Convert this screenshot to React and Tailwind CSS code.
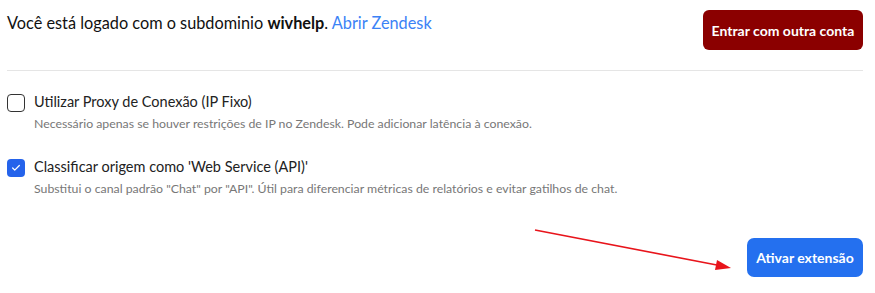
import { useState } from 'react';
import { Check } from 'lucide-react';

function Option({ checked, onToggle, label, hint }) {
  return (
    <div className="flex items-start gap-[9px]">
      <button
        onClick={onToggle}
        className={`mt-[3px] flex h-[18px] w-[18px] shrink-0 items-center justify-center rounded-[4px] ${
          checked ? 'bg-[#2563eb]' : 'border-[1.5px] border-[#333] bg-white'
        }`}
      >
        {checked && <Check className="h-[10px] w-[10px] text-white" strokeWidth={3} />}
      </button>
      <div>
        <div className="text-[14.5px] leading-[22px] text-[#222]">{label}</div>
        <div className="mt-[2px] text-[12.3px] leading-[18px] text-[#777]">{hint}</div>
      </div>
    </div>
  );
}

export default function App() {
  const [proxy, setProxy] = useState(false);
  const [api, setApi] = useState(true);

  return (
    <div
      className="relative h-[293px] w-[875px] bg-white pl-[7px] pr-[12px]"
      style={{ fontFamily: 'Lato, "Noto Sans", sans-serif' }}
    >
      <div className="flex items-start justify-between pt-[10px]">
        <div className="mt-[1px] text-[16.3px] leading-[24px] text-[#111]">
          Você está logado com o subdominio <b className="font-bold">wivhelp</b>.{' '}
          <a href="#" className="text-[#3b82f6]">Abrir Zendesk</a>
        </div>
        <button className="h-[40px] w-[160px] rounded-[6px] bg-[#8b0000] text-[14px] font-bold text-white">
          Entrar com outra conta
        </button>
      </div>

      <div className="mt-[20px] border-t border-[#e5e5e5]" />

      <div className="mt-[20px] flex flex-col gap-[23px]">
        <Option
          checked={proxy}
          onToggle={() => setProxy(!proxy)}
          label="Utilizar Proxy de Conexão (IP Fixo)"
          hint="Necessário apenas se houver restrições de IP no Zendesk. Pode adicionar latência à conexão."
        />
        <Option
          checked={api}
          onToggle={() => setApi(!api)}
          label="Classificar origem como 'Web Service (API)'"
          hint={'Substitui o canal padrão "Chat" por "API". Útil para diferenciar métricas de relatórios e evitar gatilhos de chat.'}
        />
      </div>

      <div className="mt-[40px] flex justify-end">
        <button className="h-[39px] w-[116px] rounded-[7px] bg-[#2470ef] text-[14px] font-bold text-white">
          Ativar extensão
        </button>
      </div>

      {/* annotation arrow */}
      <svg className="pointer-events-none absolute left-0 top-0" width="875" height="293">
        <line x1="535" y1="230" x2="722" y2="266" stroke="#e8141b" strokeWidth="1.6" />
        <polygon points="731,268 717,260 715,270" fill="#e8141b" />
      </svg>
    </div>
  );
}
